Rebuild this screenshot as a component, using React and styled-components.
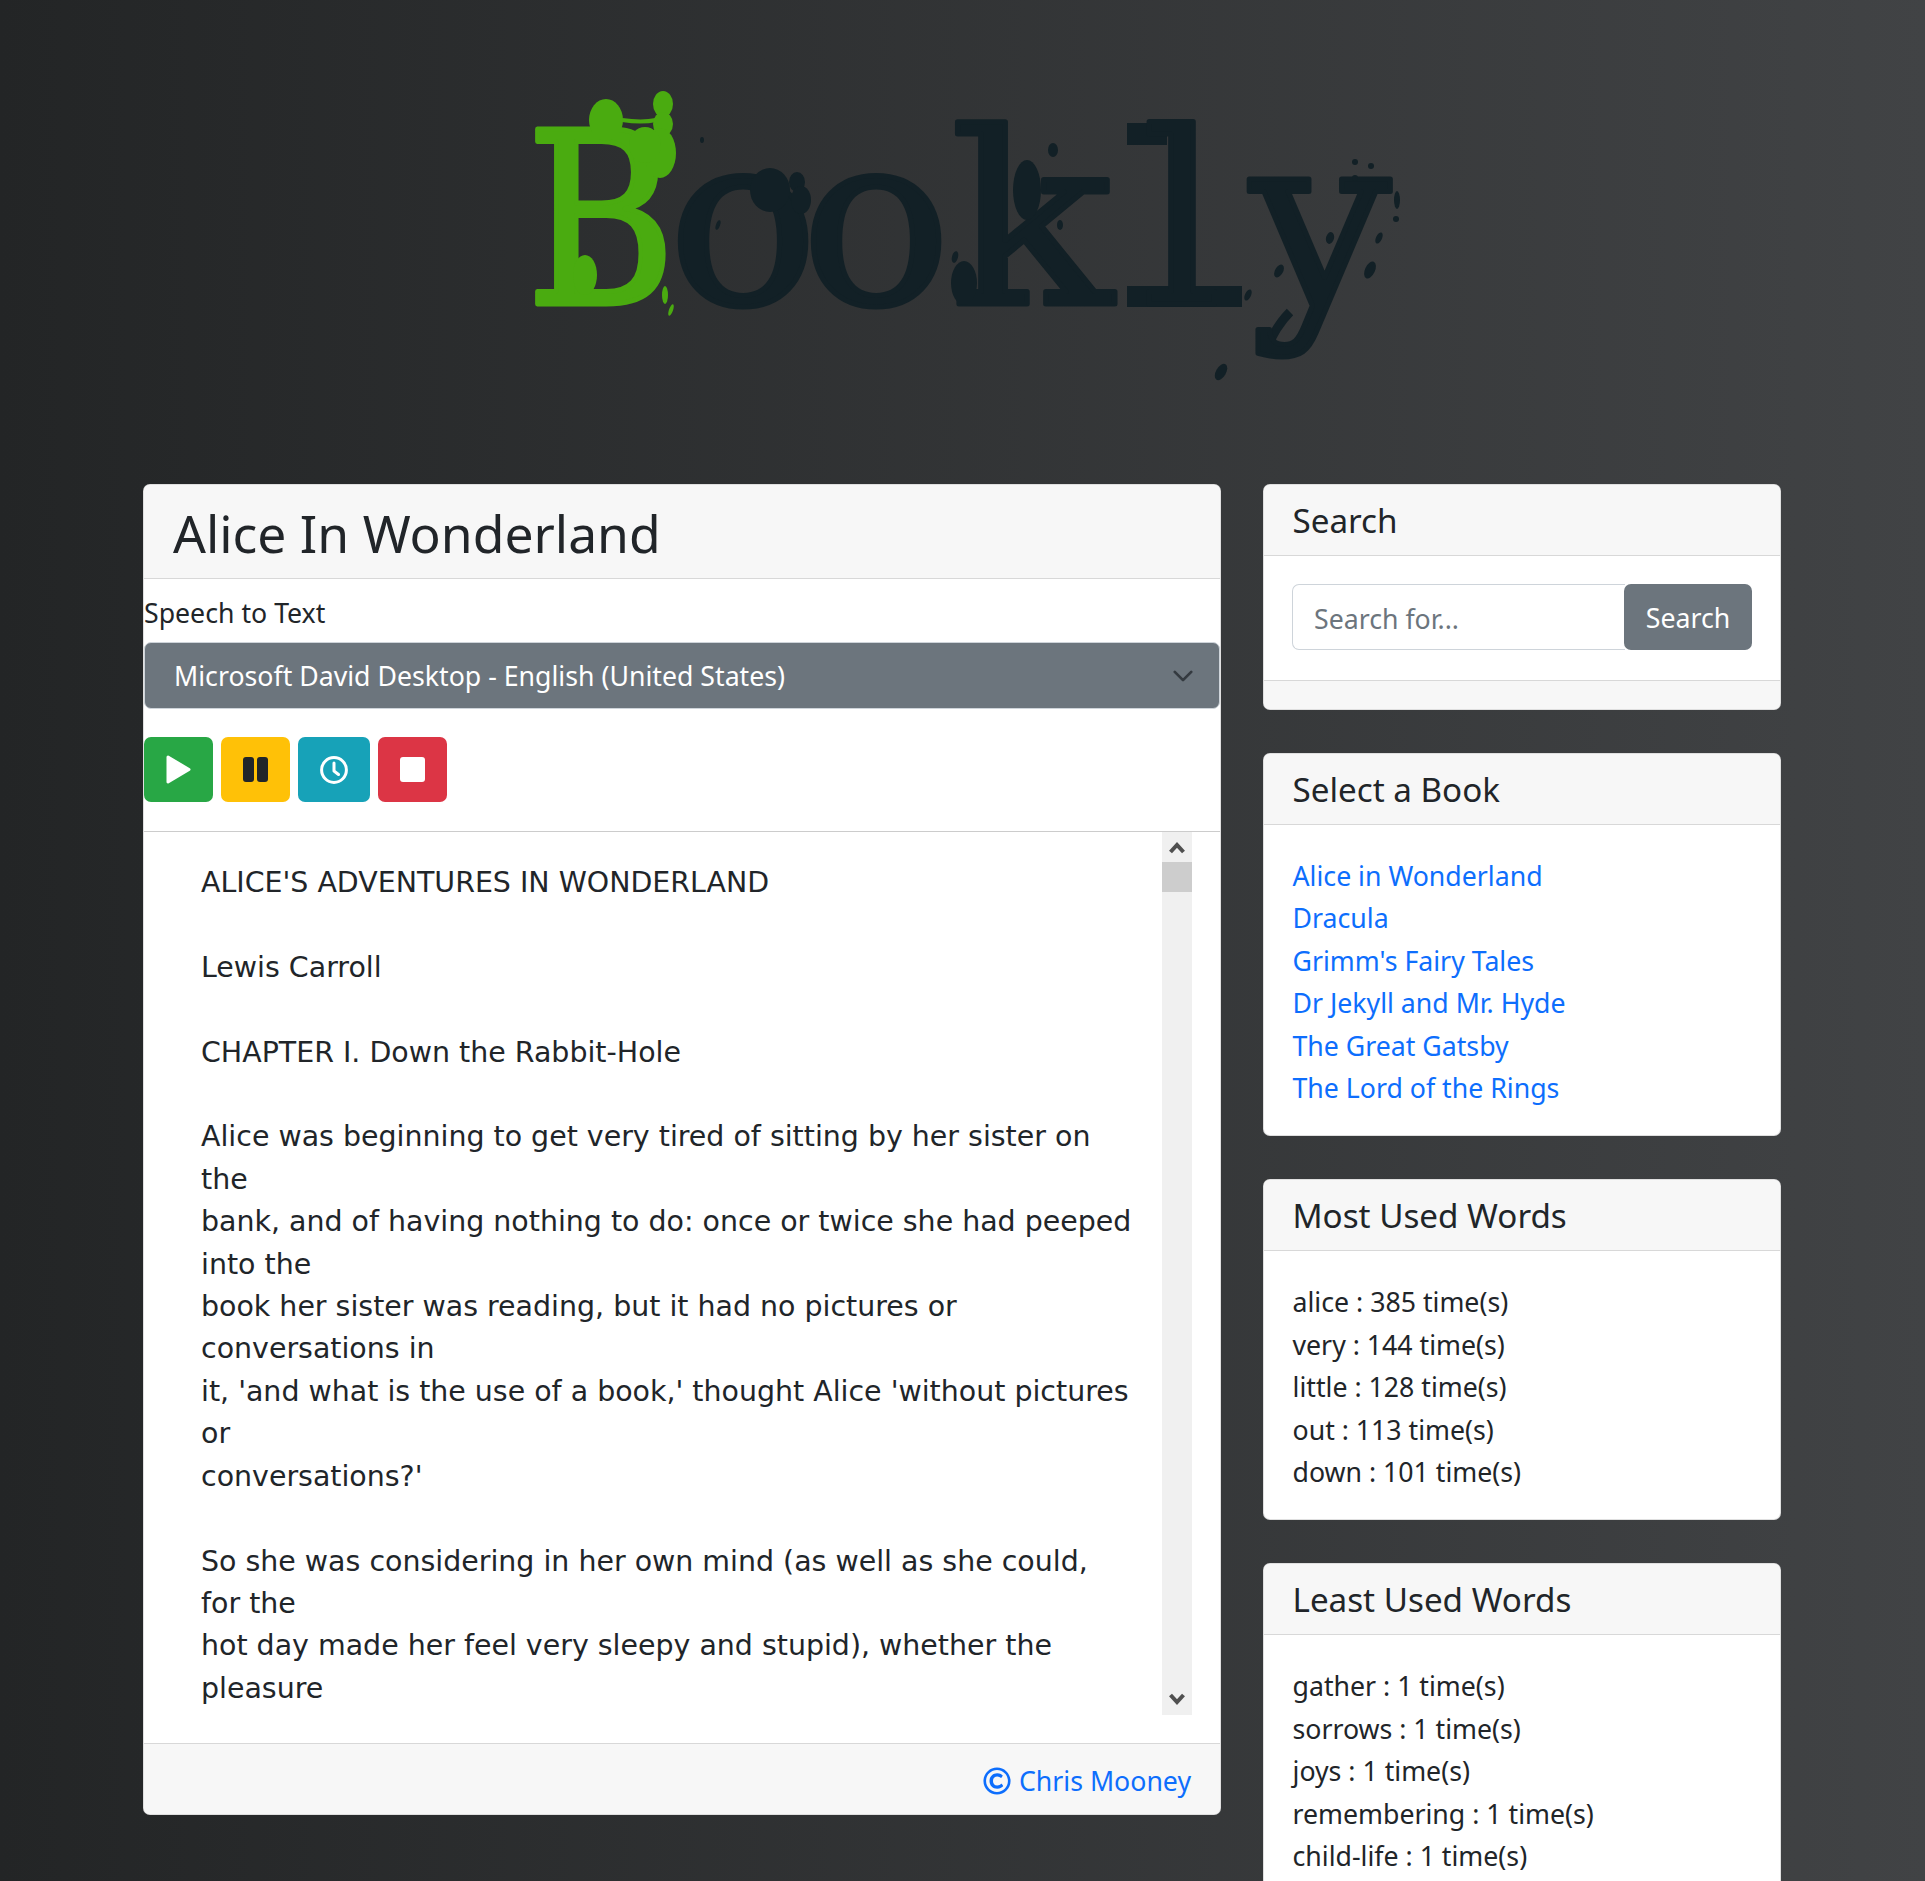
import styled, { createGlobalStyle } from "styled-components";
import { FaRegCopyright } from "react-icons/fa";

const GlobalStyle = createGlobalStyle`
  html, body {
    margin: 0;
    padding: 0;
  }
  body {
    font-family: "Noto Sans", "Open Sans", sans-serif;
    font-size: 26.7px;
    line-height: 42.4px;
    color: #212529;
  }
`;

const Page = styled.div`
  height: 1881px;
  overflow: hidden;
  box-sizing: border-box;
  padding: 0 144px 0 143px;
  background: linear-gradient(to right, #232526, #414345);
`;

const LogoBar = styled.header`
  height: 484px;
  display: flex;
  justify-content: center;
`;

const LogoArt = styled.svg`
  width: 1925px;
  height: 484px;
  flex: none;
`;

const LogoLetter = styled.text`
  font-family: "DejaVu Serif", serif;
  font-size: 240px;
  stroke-width: 5px;
  stroke-linejoin: round;
`;

const Columns = styled.div`
  display: grid;
  grid-template-columns: 1078px 518px;
  column-gap: 42px;
  align-items: start;
`;

const Sidebar = styled.aside`
  display: flex;
  flex-direction: column;
  gap: 43px;
`;

const Card = styled.section`
  background: #fff;
  border: 1px solid rgba(0, 0, 0, 0.125);
  border-radius: 7px;
  overflow: hidden;
`;

const CardHead = styled.div`
  background: #f7f7f7;
  border-bottom: 1px solid rgba(0, 0, 0, 0.125);
  padding: 15px 28.5px 12.6px;
  font-size: 33.2px;
`;

const MainHead = styled.h1`
  margin: 0;
  background: #f7f7f7;
  border-bottom: 1px solid rgba(0, 0, 0, 0.125);
  padding: 15px 29px 12px;
  font-size: 51.6px;
  line-height: 66px;
  font-weight: 400;
`;

const CardBody = styled.div`
  padding: 30.4px 28.5px 25.6px;
`;

const SpeechBox = styled.div`
  padding: 13px 0 0;
`;

const VoiceSelect = styled.select`
  display: block;
  width: 100%;
  height: 67px;
  margin-top: 8px;
  padding: 0 60px 0 29px;
  appearance: none;
  font: inherit;
  color: #fff;
  background-color: #6c757d;
  background-image: url("data:image/svg+xml,%3csvg xmlns='http://www.w3.org/2000/svg' viewBox='0 0 16 16'%3e%3cpath fill='none' stroke='%23343a40' stroke-linecap='round' stroke-linejoin='round' stroke-width='2' d='M2 5l6 6 6-6'/%3e%3c/svg%3e");
  background-repeat: no-repeat;
  background-position: right 25px center;
  background-size: 22px 22px;
  border: 1.5px solid #ced4da;
  border-radius: 7px;
`;

const Controls = styled.div`
  display: flex;
  gap: 8px;
  margin: 28px 0 29px;
`;

const ControlButton = styled.button`
  width: ${(p) => p.$width || 69}px;
  height: 65px;
  padding: 0;
  display: flex;
  align-items: center;
  justify-content: center;
  background: ${(p) => p.$bg};
  color: ${(p) => p.$fg};
  border: 0;
  border-radius: 7px;
`;

const ReaderRow = styled.div`
  display: flex;
  height: 883px;
  border-top: 1px solid rgba(0, 0, 0, 0.2);
  padding-right: 28px;
  margin-bottom: 28px;
`;

const ReaderText = styled.div`
  flex: 1;
  min-width: 0;
  padding: 29.6px 29px 0 57px;
  font-family: "DejaVu Sans", sans-serif;
  font-size: 28.45px;
  white-space: pre-wrap;
  overflow: hidden;
`;

const ScrollTrack = styled.div`
  width: 30px;
  flex: none;
  background: #f0f0f0;
  display: flex;
  flex-direction: column;
`;

const ScrollArrow = styled.div`
  height: 30px;
  display: flex;
  align-items: center;
  justify-content: center;
  color: #505050;
`;

const ScrollThumb = styled.div`
  height: 30px;
  background: #cdcdcd;
`;

const ScrollGap = styled.div`
  flex: 1;
`;

const CardFoot = styled.div`
  background: #f7f7f7;
  border-top: 1px solid rgba(0, 0, 0, 0.125);
  padding: 15.6px 29px 12px;
  display: flex;
  justify-content: flex-end;
  min-height: ${(p) => (p.$empty ? "28.5px" : "auto")};
  box-sizing: border-box;
`;

const Credit = styled.a`
  color: #0d6efd;
  text-decoration: none;
  display: flex;
  align-items: center;
  gap: 8px;
`;

const SearchBody = styled.div`
  padding: 28px 28px 30px;
`;

const SearchGroup = styled.div`
  display: flex;
`;

const SearchInput = styled.input`
  flex: 1;
  min-width: 0;
  height: 66px;
  box-sizing: border-box;
  padding: 2px 21px 0;
  font: inherit;
  color: #212529;
  background: #fff;
  border: 1px solid #ced4da;
  border-right: 0;
  border-radius: 7px 0 0 7px;
  &::placeholder {
    color: #6c757d;
    opacity: 1;
  }
`;

const SearchButton = styled.button`
  width: 128px;
  height: 66px;
  padding: 2px 0 0;
  font: inherit;
  color: #fff;
  background: #6c757d;
  border: 0;
  border-radius: 7px;
  margin-left: -1px;
`;

const PlainList = styled.ul`
  list-style: none;
  margin: 0;
  padding: 0;
`;

const BookLink = styled.a`
  color: #0d6efd;
  text-decoration: none;
`;

const Chevron = ({ up }) => (
  <svg width="18" height="14" viewBox="0 0 18 14" aria-hidden="true">
    <path
      d={up ? "M2.5 12l6.5-7 6.5 7" : "M2.5 2l6.5 7 6.5-7"}
      fill="none"
      stroke="currentColor"
      strokeWidth="4"
    />
  </svg>
);

const PlayIcon = () => (
  <svg width="25" height="29" viewBox="0 0 25 29" aria-hidden="true">
    <path
      d="M2 2l21 12.5L2 27z"
      fill="currentColor"
      stroke="currentColor"
      strokeWidth="3"
      strokeLinejoin="round"
    />
  </svg>
);

const PauseIcon = () => (
  <svg width="25" height="25" viewBox="0 0 25 25" aria-hidden="true">
    <rect x="0" width="11" height="25" rx="3" fill="currentColor" />
    <rect x="14" width="11" height="25" rx="3" fill="currentColor" />
  </svg>
);

const ClockIcon = () => (
  <svg width="28" height="28" viewBox="0 0 28 28" aria-hidden="true">
    <circle cx="14" cy="14" r="12.4" fill="none" stroke="currentColor" strokeWidth="3" />
    <path
      d="M14 7v8l4.5 3.5"
      fill="none"
      stroke="currentColor"
      strokeWidth="3"
      strokeLinecap="round"
      strokeLinejoin="round"
    />
  </svg>
);

const StopIcon = () => (
  <svg width="25" height="25" viewBox="0 0 25 25" aria-hidden="true">
    <rect width="25" height="25" rx="3" fill="currentColor" />
  </svg>
);

const DARK = "#122026";
const GREEN = "#4aab10";

// letter, origin x, baseline y, horizontal stretch
const logoLetters = [
  ["B", 526, 304, 0.85, GREEN],
  ["o", 668, 304, 1.04, DARK],
  ["o", 801, 304, 1.04, DARK],
  ["k", 950, 304, 1.12, DARK],
  ["l", 1142, 304, 1.04, DARK],
  ["y", 1250, 304, 1.04, DARK],
];

const greenBlots = [
  [606, 120, 17, 21, 0],
  [663, 104, 10, 13, 0],
  [663, 124, 10, 12, 0],
  [660, 153, 16, 25, 0],
  [645, 145, 16, 18, 0],
  [585, 275, 12, 20, 0],
  [665, 295, 3, 9, 0],
  [671, 310, 2, 6, 20],
];

const darkBlots = [
  [770, 190, 20, 22, 0],
  [797, 182, 8, 10, 0],
  [801, 200, 10, 14, 0],
  [1027, 190, 14, 30, 0],
  [1053, 150, 5, 7, 0],
  [964, 283, 13, 22, 0],
  [1221, 372, 5, 9, 30],
  [1279, 271, 4, 7, 30],
  [1370, 270, 5, 9, 25],
  [1330, 238, 4, 6, 15],
  [1379, 238, 3, 6, 25],
  [1397, 200, 3, 9, 0],
  [1355, 162, 3, 3, 0],
  [1371, 166, 3, 3, 0],
  [1355, 178, 3, 3, 0],
  [1396, 219, 3, 3, 0],
  [1060, 225, 3, 5, 0],
  [955, 257, 3, 6, 15],
  [1248, 295, 3, 6, 25],
  [718, 225, 2, 5, 20],
  [702, 140, 2, 3, 0],
];

const Logo = () => (
  <LogoArt viewBox="0 0 1925 484" role="img" aria-label="Bookly">
    <path d="M622 120q20 3 34 0" stroke={GREEN} strokeWidth="4" fill="none" />
    <path d="M1290 312q-14 14-23 36" stroke={DARK} strokeWidth="9" fill="none" />
    <path d="M1127 123h40v22h-40zM1127 286h115v21h-115z" fill={DARK} />
    {logoLetters.map(([c, x, y, sx, color], i) => (
      <LogoLetter
        key={i}
        transform={`translate(${x} ${y}) scale(${sx} 1)`}
        fill={color}
        stroke={color}
      >
        {c}
      </LogoLetter>
    ))}
    {greenBlots.map(([cx, cy, rx, ry, rot], i) => (
      <ellipse
        key={i}
        cx={cx}
        cy={cy}
        rx={rx}
        ry={ry}
        fill={GREEN}
        transform={`rotate(${rot} ${cx} ${cy})`}
      />
    ))}
    {darkBlots.map(([cx, cy, rx, ry, rot], i) => (
      <ellipse
        key={i}
        cx={cx}
        cy={cy}
        rx={rx}
        ry={ry}
        fill={DARK}
        transform={`rotate(${rot} ${cx} ${cy})`}
      />
    ))}
  </LogoArt>
);

const bookText = `ALICE'S ADVENTURES IN WONDERLAND

Lewis Carroll

CHAPTER I. Down the Rabbit-Hole

Alice was beginning to get very tired of sitting by her sister on the
bank, and of having nothing to do: once or twice she had peeped into the
book her sister was reading, but it had no pictures or conversations in
it, 'and what is the use of a book,' thought Alice 'without pictures or
conversations?'

So she was considering in her own mind (as well as she could, for the
hot day made her feel very sleepy and stupid), whether the pleasure`;

const books = [
  "Alice in Wonderland",
  "Dracula",
  "Grimm's Fairy Tales",
  "Dr Jekyll and Mr. Hyde",
  "The Great Gatsby",
  "The Lord of the Rings",
];

const mostUsed = [
  ["alice", 385],
  ["very", 144],
  ["little", 128],
  ["out", 113],
  ["down", 101],
];

const leastUsed = [
  ["gather", 1],
  ["sorrows", 1],
  ["joys", 1],
  ["remembering", 1],
  ["child-life", 1],
];

const WordCard = ({ title, words }) => (
  <Card>
    <CardHead>{title}</CardHead>
    <CardBody>
      <PlainList>
        {words.map(([word, count]) => (
          <li key={word}>
            {word} : {count} time(s)
          </li>
        ))}
      </PlainList>
    </CardBody>
  </Card>
);

export default function App() {
  return (
    <Page>
      <GlobalStyle />
      <LogoBar>
        <Logo />
      </LogoBar>
      <Columns>
        <Card>
          <MainHead>Alice In Wonderland</MainHead>
          <SpeechBox>
            <label htmlFor="voice">Speech to Text</label>
            <VoiceSelect id="voice" defaultValue="david">
              <option value="david">Microsoft David Desktop - English (United States)</option>
            </VoiceSelect>
            <Controls>
              <ControlButton $bg="#28a745" $fg="#fff" aria-label="Play">
                <PlayIcon />
              </ControlButton>
              <ControlButton $bg="#ffc107" $fg="#212529" aria-label="Pause">
                <PauseIcon />
              </ControlButton>
              <ControlButton $bg="#17a2b8" $fg="#fff" $width={72} aria-label="Resume">
                <ClockIcon />
              </ControlButton>
              <ControlButton $bg="#dc3545" $fg="#fff" aria-label="Stop">
                <StopIcon />
              </ControlButton>
            </Controls>
          </SpeechBox>
          <ReaderRow>
            <ReaderText>{bookText}</ReaderText>
            <ScrollTrack>
              <ScrollArrow>
                <Chevron up />
              </ScrollArrow>
              <ScrollThumb />
              <ScrollGap />
              <ScrollArrow>
                <Chevron />
              </ScrollArrow>
            </ScrollTrack>
          </ReaderRow>
          <CardFoot>
            <Credit href="#">
              <FaRegCopyright size={28} />
              Chris Mooney
            </Credit>
          </CardFoot>
        </Card>
        <Sidebar>
          <Card>
            <CardHead>Search</CardHead>
            <SearchBody>
              <SearchGroup>
                <SearchInput placeholder="Search for..." />
                <SearchButton>Search</SearchButton>
              </SearchGroup>
            </SearchBody>
            <CardFoot $empty />
          </Card>
          <Card>
            <CardHead>Select a Book</CardHead>
            <CardBody>
              <PlainList>
                {books.map((b) => (
                  <li key={b}>
                    <BookLink href="#">{b}</BookLink>
                  </li>
                ))}
              </PlainList>
            </CardBody>
          </Card>
          <WordCard title="Most Used Words" words={mostUsed} />
          <WordCard title="Least Used Words" words={leastUsed} />
        </Sidebar>
      </Columns>
    </Page>
  );
}
